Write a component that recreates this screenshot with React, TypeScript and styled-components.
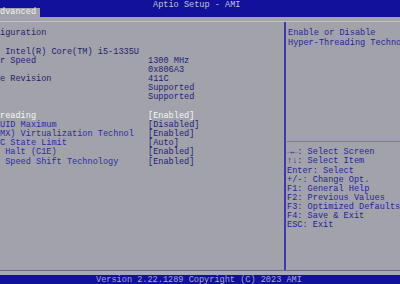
import styled, { createGlobalStyle } from 'styled-components';

const GlobalStyle = createGlobalStyle`
  html, body {
    margin: 0;
    padding: 0;
    background: #a2a2aa;
  }
`;

const Screen = styled.div`
  width: 400px;
  height: 284px;
  overflow: hidden;
  display: flex;
  flex-direction: column;
  background: #a2a2aa;
  font-family: 'Liberation Mono', 'DejaVu Sans Mono', monospace;
  font-size: 8.58px;
  line-height: 9.16px;
  white-space: pre;
`;

const TopBar = styled.div`
  height: 17px;
  background: #11119c;
  display: flex;
  flex-direction: column;
`;

const Title = styled.div`
  height: 8px;
  line-height: 10px;
  padding-left: 153px;
  color: #c4c4d4;
`;

const Tabs = styled.div`
  display: flex;
  height: 9px;
`;

const Tab = styled.div<{ $active?: boolean }>`
  width: 40px;
  height: 9px;
  line-height: 9.5px;
  background: ${(p) => (p.$active ? '#a2a2aa' : 'transparent')};
  color: #f4f4f8;
`;

const Frame = styled.div`
  margin-top: 4px;
  flex: 1;
  display: grid;
  grid-template-columns: 284px 1fr;
  border-top: 1px solid #c2c2ca;
  border-bottom: 1px solid #6a6a8a;
`;

const LeftPane = styled.div`
  padding-top: 7.4px;
`;

const RightPane = styled.div`
  border-left: 2px solid #3a3aa8;
  display: flex;
  flex-direction: column;
  overflow: hidden;
`;

const HelpTop = styled.div`
  height: 111.3px;
  padding: 7.4px 0 0 1px;
  margin-left: 1px;
  border-bottom: 1px solid #7878aa;
  color: #24249c;
`;

const Keys = styled.div`
  padding: 6.5px 0 0 1px;
  color: #24249c;
`;

const Row = styled.div<{ $tone?: 'info' | 'item' | 'active' }>`
  display: grid;
  grid-template-columns: 148px 1fr;
  height: 9.16px;
  color: ${(p) =>
    p.$tone === 'active' ? '#f6f6fa' : p.$tone === 'item' ? '#2a2aac' : '#1e1e70'};
`;

const Value = styled.span<{ $tone?: 'info' | 'item' | 'active' }>`
  color: ${(p) => (p.$tone === 'active' ? '#f6f6fa' : '#1e1e78')};
`;

const Line = styled.div`
  height: 9.16px;
`;

const Gap = styled.div`
  height: 4px;
  background: #a8a8bc;
`;

const Footer = styled.div`
  height: 9px;
  line-height: 10px;
  background: #11119c;
  color: #a8a8c8;
  padding-left: 96px;
`;

type RowData = { label: string; value?: string; tone?: 'info' | 'item' | 'active' };

const rows: RowData[] = [
  { label: 'iguration' },
  { label: '' },
  { label: ' Intel(R) Core(TM) i5-1335U' },
  { label: 'r Speed', value: '1300 MHz' },
  { label: '', value: '0x806A3' },
  { label: 'e Revision', value: '411C' },
  { label: '', value: 'Supported' },
  { label: '', value: 'Supported' },
  { label: '' },
  { label: 'reading', value: '[Enabled]', tone: 'active' },
  { label: 'UID Maximum', value: '[Disabled]', tone: 'item' },
  { label: 'MX) Virtualization Technol', value: '[Enabled]', tone: 'item' },
  { label: 'C State Limit', value: '[Auto]', tone: 'item' },
  { label: ' Halt (C1E)', value: '[Enabled]', tone: 'item' },
  { label: ' Speed Shift Technology', value: '[Enabled]', tone: 'item' },
];

const keys = [
  '\u2192\u2190: Select Screen',
  '\u2191\u2193: Select Item',
  'Enter: Select',
  '+/-: Change Opt.',
  'F1: General Help',
  'F2: Previous Values',
  'F3: Optimized Defaults',
  'F4: Save & Exit',
  'ESC: Exit',
];

export default function App() {
  return (
    <>
      <GlobalStyle />
      <Screen>
        <TopBar>
          <Title>Aptio Setup - AMI</Title>
          <Tabs>
            <Tab $active>dvanced</Tab>
          </Tabs>
        </TopBar>
        <Frame>
          <LeftPane>
            {rows.map((r, i) => (
              <Row key={i} $tone={r.tone}>
                <span>{r.label}</span>
                <Value $tone={r.tone}>{r.value ?? ''}</Value>
              </Row>
            ))}
          </LeftPane>
          <RightPane>
            <HelpTop>
              <Line>Enable or Disable</Line>
              <Line>Hyper-Threading Techno</Line>
            </HelpTop>
            <Keys>
              {keys.map((k) => (
                <Line key={k}>{k}</Line>
              ))}
            </Keys>
          </RightPane>
        </Frame>
        <Gap />
        <Footer>Version 2.22.1289 Copyright (C) 2023 AMI</Footer>
      </Screen>
    </>
  );
}
